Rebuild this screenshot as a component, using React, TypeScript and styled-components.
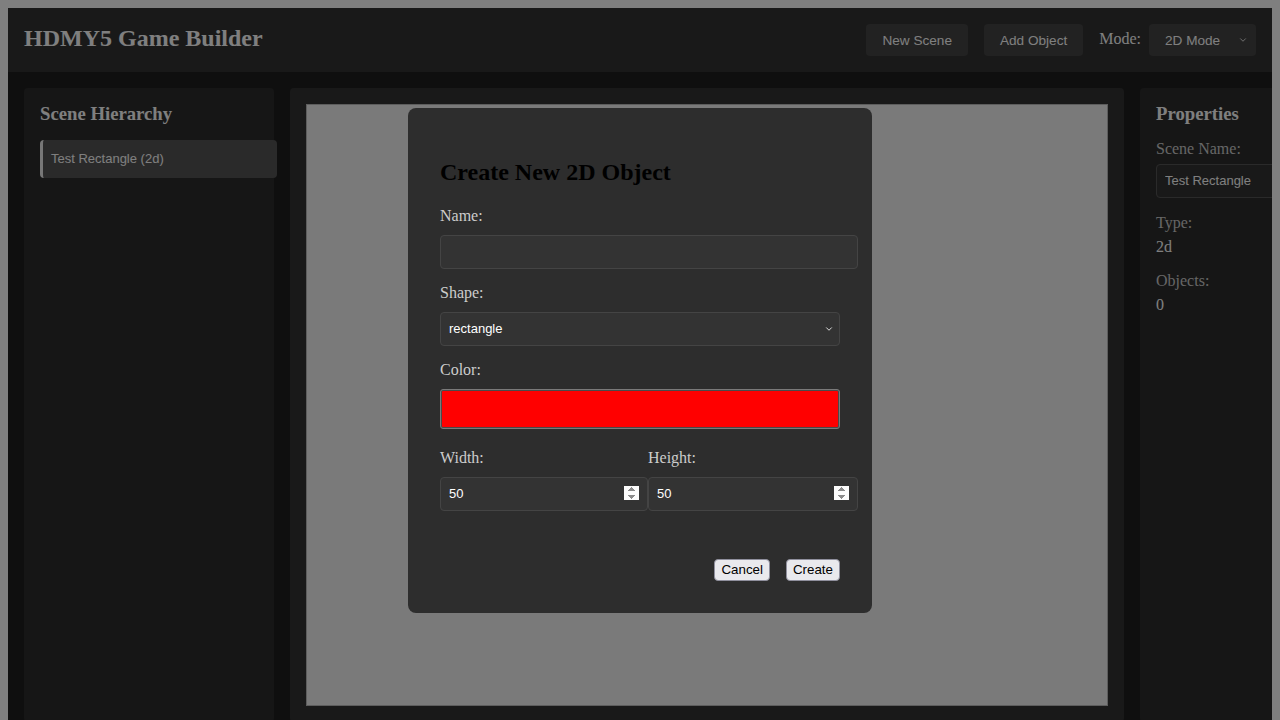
import styled, { createGlobalStyle } from "styled-components";
import { ChevronDown } from "lucide-react";

const GlobalStyle = createGlobalStyle`
  html, body {
    overflow: hidden;
  }
  body {
    margin: 8px;
    background: #ffffff;
    font-family: "Liberation Serif", "Times New Roman", serif;
  }
`;

const sans = `"Liberation Sans", Arial, Helvetica, sans-serif`;

const AppShell = styled.div`
  background: #1e1e1e;
  color: #ffffff;
`;

const Header = styled.header`
  display: flex;
  align-items: center;
  justify-content: space-between;
  height: 64px;
  padding: 0 16px;
  background: #333333;
`;

const Title = styled.h1`
  margin: 0 0 4px;
  font-size: 24px;
  font-weight: bold;
  color: #ffffff;
`;

const Toolbar = styled.div`
  display: flex;
  align-items: center;
  gap: 16px;
`;

const ToolButton = styled.button`
  height: 32px;
  padding: 0 16px;
  border: none;
  border-radius: 4px;
  background: #444444;
  color: #ffffff;
  font-family: ${sans};
  font-size: 13.6px;
`;

const ModeGroup = styled.div`
  display: flex;
  align-items: center;
  gap: 8px;
  font-size: 16px;
  color: #ffffff;
`;

const ModeLabel = styled.span`
  margin-bottom: 2px;
`;

const SelectWrap = styled.div`
  position: relative;
  display: inline-flex;
`;

const Chevron = styled.span<{ $right: number; $color: string }>`
  position: absolute;
  top: 50%;
  right: ${({ $right }) => $right}px;
  transform: translateY(-50%);
  display: flex;
  color: ${({ $color }) => $color};
  pointer-events: none;
`;

const ModeSelect = styled.select`
  appearance: none;
  width: 107px;
  height: 32px;
  padding: 0 28px 0 16px;
  border: none;
  border-radius: 4px;
  background: #444444;
  color: #ffffff;
  font-family: ${sans};
  font-size: 13.6px;
`;

const Main = styled.main`
  display: flex;
  align-items: stretch;
  gap: 16px;
  padding: 16px;
`;

const SidePanel = styled.aside`
  flex-shrink: 0;
  box-sizing: border-box;
  width: 250px;
  padding: 16px;
  border-radius: 4px;
  background: #2d2d2d;
`;

const PanelTitle = styled.h3`
  margin: -1px 0 15px;
  font-size: 18.72px;
  font-weight: bold;
  color: #ffffff;
`;

const HierarchyItem = styled.div`
  width: 100%;
  padding: 11px 8px;
  border-left: 3px solid #eeeeee;
  border-radius: 4px;
  background: #555555;
  color: #ffffff;
  font-family: ${sans};
  font-size: 13px;
  line-height: 16px;
`;

const CanvasPanel = styled.section`
  flex-shrink: 0;
  padding: 16px;
  border-radius: 4px;
  background: #333333;
`;

const Viewport = styled.canvas`
  display: block;
  width: 800px;
  height: 600px;
  border: 1px solid #bbbbbb;
  background: #f4f4f4;
`;

const PropGroup = styled.div`
  margin-bottom: 16px;
`;

const PropLabel = styled.label`
  display: block;
  margin-bottom: 6px;
  font-size: 16px;
  color: #cccccc;
`;

const PropValue = styled.div`
  font-size: 16px;
  color: #ffffff;
`;

const TextField = styled.input`
  display: block;
  width: 100%;
  height: 16px;
  padding: 8px;
  border: 1px solid #555555;
  border-radius: 4px;
  background: #333333;
  color: #ffffff;
  font-family: ${sans};
  font-size: 13px;
  line-height: 16px;
  outline: none;
`;

const Overlay = styled.div`
  position: fixed;
  inset: 0;
  display: flex;
  align-items: center;
  justify-content: center;
  background: rgba(0, 0, 0, 0.5);
`;

const Modal = styled.div`
  width: 400px;
  padding: 32px;
  border-radius: 8px;
  background: #2d2d2d;
`;

const ModalTitle = styled.h2`
  margin: 19px 0 21px;
  font-size: 24px;
  font-weight: bold;
  color: #000000;
`;

const FormGroup = styled.div<{ $gap?: number }>`
  margin-bottom: ${({ $gap }) => $gap ?? 15}px;
`;

const FieldLabel = styled.label`
  display: block;
  margin-bottom: 10px;
  font-size: 16px;
  color: #cccccc;
`;

const ModalInput = styled.input`
  display: block;
  width: 100%;
  height: 16px;
  padding: 8px;
  border: 1px solid #444444;
  border-radius: 4px;
  background: #333333;
  color: #ffffff;
  font-family: ${sans};
  font-size: 13px;
  line-height: 16px;
  outline: none;
`;

const NumberInput = styled(ModalInput)`
  box-sizing: border-box;
  height: 34px;

  &::-webkit-inner-spin-button {
    opacity: 1;
  }
`;

const ShapeSelect = styled.select`
  appearance: none;
  display: block;
  box-sizing: border-box;
  width: 400px;
  height: 34px;
  padding: 0 24px 0 8px;
  border: 1px solid #444444;
  border-radius: 4px;
  background: #333333;
  color: #ffffff;
  font-family: ${sans};
  font-size: 13px;
`;

const ColorInput = styled.input`
  display: block;
  box-sizing: border-box;
  width: 400px;
  height: 40px;
  padding: 0;
  border: 1px solid #7a7a7a;
  border-radius: 3px;
  background: #4a4a4a;
  cursor: pointer;

  &::-webkit-color-swatch-wrapper {
    padding: 1px;
  }
  &::-webkit-color-swatch {
    border: none;
    border-radius: 1px;
  }
`;

const SizeRow = styled.div`
  display: grid;
  grid-template-columns: 208px 210px;
`;

const Actions = styled.div`
  display: flex;
  justify-content: flex-end;
  gap: 16px;
  margin-top: 48px;
`;

const DialogButton = styled.button`
  height: 22px;
  padding: 0 6px;
  border: 1px solid #8f8f9d;
  border-radius: 4px;
  background: #e9e9ed;
  color: #000000;
  font-family: ${sans};
  font-size: 13.33px;
`;

export default function App() {
  return (
    <>
      <GlobalStyle />
      <AppShell>
        <Header>
          <Title>HDMY5 Game Builder</Title>
          <Toolbar>
            <ToolButton>New Scene</ToolButton>
            <ToolButton>Add Object</ToolButton>
            <ModeGroup>
              <ModeLabel>Mode:</ModeLabel>
              <SelectWrap>
                <ModeSelect defaultValue="2d">
                  <option value="2d">2D Mode</option>
                  <option value="3d">3D Mode</option>
                </ModeSelect>
                <Chevron $right={8} $color="#ffffff">
                  <ChevronDown size={10} strokeWidth={2} />
                </Chevron>
              </SelectWrap>
            </ModeGroup>
          </Toolbar>
        </Header>

        <Main>
          <SidePanel>
            <PanelTitle>Scene Hierarchy</PanelTitle>
            <HierarchyItem>Test Rectangle (2d)</HierarchyItem>
          </SidePanel>

          <CanvasPanel>
            <Viewport width={800} height={600} />
          </CanvasPanel>

          <SidePanel>
            <PanelTitle>Properties</PanelTitle>
            <PropGroup>
              <PropLabel>Scene Name:</PropLabel>
              <TextField defaultValue="Test Rectangle" />
            </PropGroup>
            <PropGroup>
              <PropLabel>Type:</PropLabel>
              <PropValue>2d</PropValue>
            </PropGroup>
            <PropGroup>
              <PropLabel>Objects:</PropLabel>
              <PropValue>0</PropValue>
            </PropGroup>
          </SidePanel>
        </Main>
      </AppShell>

      <Overlay>
        <Modal>
          <ModalTitle>Create New 2D Object</ModalTitle>
          <FormGroup>
            <FieldLabel>Name:</FieldLabel>
            <ModalInput defaultValue="" />
          </FormGroup>
          <FormGroup>
            <FieldLabel>Shape:</FieldLabel>
            <SelectWrap>
              <ShapeSelect defaultValue="rectangle">
                <option value="rectangle">rectangle</option>
                <option value="circle">circle</option>
              </ShapeSelect>
              <Chevron $right={6} $color="#ffffff">
                <ChevronDown size={10} strokeWidth={2} />
              </Chevron>
            </SelectWrap>
          </FormGroup>
          <FormGroup $gap={20}>
            <FieldLabel>Color:</FieldLabel>
            <ColorInput type="color" defaultValue="#ff0000" />
          </FormGroup>
          <SizeRow>
            <div>
              <FieldLabel>Width:</FieldLabel>
              <NumberInput type="number" defaultValue={50} />
            </div>
            <div>
              <FieldLabel>Height:</FieldLabel>
              <NumberInput type="number" defaultValue={50} />
            </div>
          </SizeRow>
          <Actions>
            <DialogButton>Cancel</DialogButton>
            <DialogButton>Create</DialogButton>
          </Actions>
        </Modal>
      </Overlay>
    </>
  );
}
